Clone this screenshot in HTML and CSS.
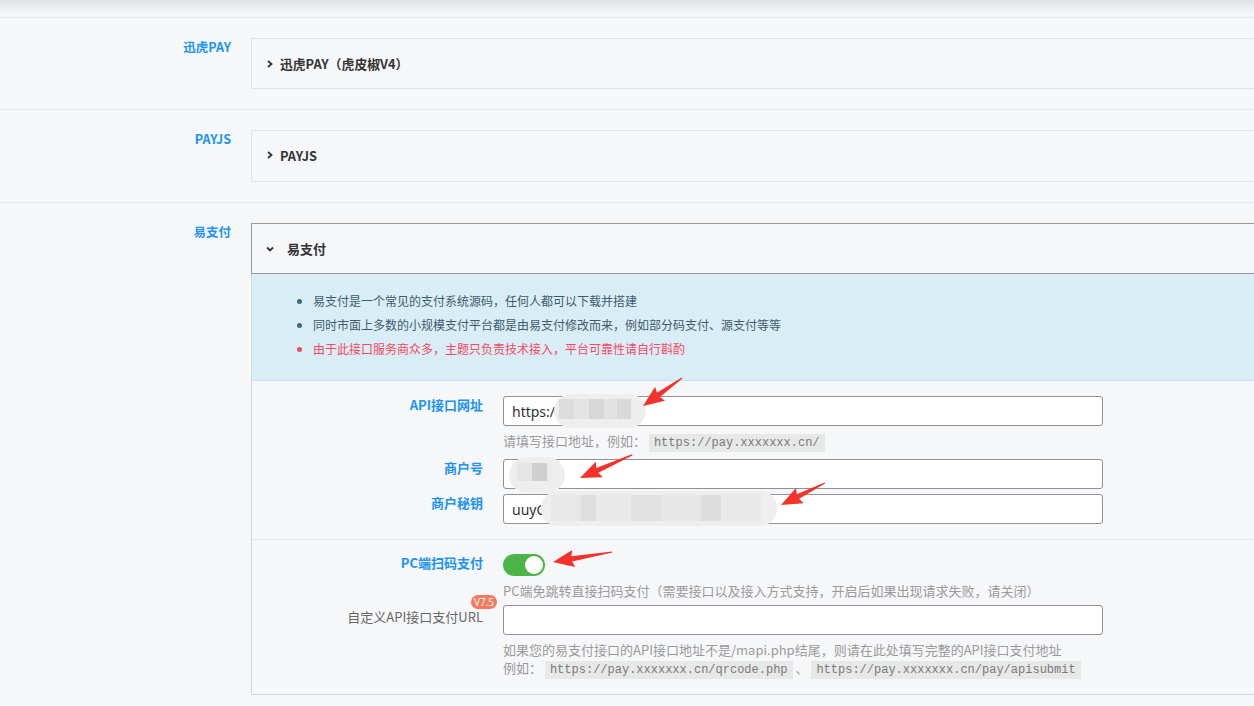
FILE: index.html
```html
<!DOCTYPE html>
<html lang="zh-CN">
<head>
<meta charset="utf-8">
<title>支付设置</title>
<link rel="stylesheet" href="styles.css">
</head>
<body>
<div class="topbar"></div>

<div class="row">
  <div class="row-label">迅虎PAY</div>
  <div class="panel">
    <div class="panel-head">
      <svg class="chev" width="8" height="10" viewBox="0 0 8 10"><polyline points="2,2 5.5,5 2,8" fill="none" stroke="#333" stroke-width="1.8"/></svg>
      <span>迅虎PAY（虎皮椒V4）</span>
    </div>
  </div>
</div>

<div class="row">
  <div class="row-label">PAYJS</div>
  <div class="panel">
    <div class="panel-head tall">
      <svg class="chev" width="8" height="10" viewBox="0 0 8 10"><polyline points="2,2 5.5,5 2,8" fill="none" stroke="#333" stroke-width="1.8"/></svg>
      <span>PAYJS</span>
    </div>
  </div>
</div>

<div class="row last">
  <div class="row-label">易支付</div>
  <div class="panel open">
    <div class="panel-head">
      <svg class="chev-down" width="10" height="8" viewBox="0 0 10 8"><polyline points="2,2.5 5,5.5 8,2.5" fill="none" stroke="#333" stroke-width="1.8"/></svg>
      <span>易支付</span>
    </div>
    <div class="notice">
      <ul>
        <li>易支付是一个常见的支付系统源码，任何人都可以下载并搭建</li>
        <li>同时市面上多数的小规模支付平台都是由易支付修改而来，例如部分码支付、源支付等等</li>
        <li class="warn">由于此接口服务商众多，主题只负责技术接入，平台可靠性请自行斟酌</li>
      </ul>
    </div>

    <div class="form-group">
      <div class="field">
        <label class="field-label">API接口网址</label>
        <div class="control">
          <div class="input-wrap">
            <input class="text-input" type="text" value="https:/">
            <span class="mosaic m1"><span class="tiles"></span></span>
          </div>
          <div class="help">请填写接口地址，例如： <code>https://pay.xxxxxxx.cn/</code></div>
        </div>
      </div>
      <div class="field gap6">
        <label class="field-label">商户号</label>
        <div class="control">
          <div class="input-wrap">
            <input class="text-input" type="text" value="">
            <span class="mosaic m2"><span class="tiles"></span></span>
          </div>
        </div>
      </div>
      <div class="field gap5">
        <label class="field-label">商户秘钥</label>
        <div class="control">
          <div class="input-wrap">
            <input class="text-input" type="text" value="uuyC">
            <span class="mosaic m3"><span class="tiles"></span></span>
          </div>
        </div>
      </div>
    </div>

    <div class="form-group second">
      <div class="field">
        <label class="field-label">PC端扫码支付</label>
        <div class="control">
          <span class="switch"><span class="knob"></span></span>
          <div class="help">PC端免跳转直接扫码支付（需要接口以及接入方式支持，开启后如果出现请求失败，请关闭）</div>
        </div>
      </div>
      <div class="field gap4">
        <label class="field-label plain">自定义API接口支付URL<span class="badge">V7.5</span></label>
        <div class="control">
          <div class="input-wrap">
            <input class="text-input" type="text" value="">
          </div>
          <div class="help tight">如果您的易支付接口的API接口地址不是/mapi.php结尾，则请在此处填写完整的API接口支付地址<br>例如： <code>https://pay.xxxxxxx.cn/qrcode.php</code> 、 <code>https://pay.xxxxxxx.cn/pay/apisubmit</code></div>
        </div>
      </div>
    </div>
  </div>
</div>

<svg class="annot" width="1254" height="706" viewBox="0 0 1254 706">
  <g fill="#f5312c">
    <g transform="translate(643 406) rotate(144.3)"><polygon points="-48,-0.6 -19,-2.6 -21,-8.5 0,0 -21,8.5 -19,2.6 -48,0.6"/></g>
    <g transform="translate(580 478) rotate(156.1)"><polygon points="-57,-0.6 -19,-2.6 -21,-8.5 0,0 -21,8.5 -19,2.6 -57,0.6"/></g>
    <g transform="translate(781 505) rotate(153.4)"><polygon points="-49,-0.6 -19,-2.6 -21,-8.5 0,0 -21,8.5 -19,2.6 -49,0.6"/></g>
    <g transform="translate(553 562) rotate(170.4)"><polygon points="-60,-0.6 -19,-2.6 -21,-8.5 0,0 -21,8.5 -19,2.6 -60,0.6"/></g>
  </g>
</svg>
</body>
</html>
```

FILE: styles.css
```css
html, body {
  margin: 0;
  padding: 0;
  overflow: hidden;
}
body {
  position: relative;
  width: 1254px;
  height: 706px;
  background: #f6f7f9;
  font-family: "Noto Sans CJK SC", "Noto Sans", sans-serif;
  font-size: 12px;
  color: #333;
}
.topbar {
  height: 17px;
  background: linear-gradient(#dfe0e2, #f6f7f9 14px);
  border-bottom: 1px solid #e8e9eb;
}
.row {
  display: flex;
  align-items: flex-start;
  padding: 20px 0;
  border-bottom: 1px solid #e6e7e9;
}
.row.last {
  border-bottom: none;
  padding-bottom: 0;
}
.row-label {
  width: 231px;
  flex: none;
  text-align: right;
  color: #1c93f3;
  font-weight: bold;
  font-size: 12.5px;
  line-height: 18px;
  margin-right: 20px;
}
.panel {
  flex: 1;
  margin-right: -30px;
  border: 1px solid #e2e3e5;
  background: #f6f7f9;
}
.panel-head {
  height: 49px;
  display: flex;
  align-items: center;
  padding-left: 14px;
  font-weight: bold;
  font-size: 12.8px;
  color: #333;
}
.panel-head.tall {
  height: 50px;
  padding-bottom: 2px;
  box-sizing: border-box;
}
.panel-head .chev {
  margin-right: 6px;
}
.panel.open {
  border: 1px solid #d5d6d8;
  border-top: none;
}
.panel.open .panel-head {
  margin: 0 -1px 0 -1px;
  border: 1px solid #999;
  padding-left: 13px;
  font-size: 13px;
}
.panel.open .chev-down {
  margin-right: 12px;
}
.notice {
  background: #d9edf7;
  border-bottom: 1px solid #c3e1ee;
  padding: 15px 0 19px;
}
.notice ul {
  margin: 0;
  padding-left: 61px;
  list-style: disc;
  color: #3f5a6b;
}
.notice li {
  line-height: 24px;
}
.notice li::marker {
  color: #3f6a80;
}
.notice li.warn {
  color: #f4485e;
}
.notice li.warn::marker {
  color: #f4485e;
}
.form-group {
  padding: 15px 0 15px;
  border-bottom: 1px solid #e4e5e7;
}
.form-group.second {
  padding: 14px 0 15px;
  border-bottom: none;
}
.field {
  display: flex;
  align-items: flex-start;
}
.field.gap6 { margin-top: 6px; }
.field.gap5 { margin-top: 5px; }
.field.gap4 { margin-top: 4px; }
.field-label {
  position: relative;
  width: 231px;
  flex: none;
  margin-right: 20px;
  text-align: right;
  line-height: 18px;
  font-size: 13px;
  color: #1c93f3;
  font-weight: bold;
}
.field-label.plain {
  color: #666;
  font-weight: normal;
  padding-top: 3px;
}
.badge {
  position: absolute;
  right: -14px;
  top: -10px;
  height: 14px;
  padding: 0 3px;
  border-radius: 7px;
  background: #f6775b;
  color: #fff;
  font-size: 10px;
  line-height: 14px;
  font-weight: normal;
  font-family: "Noto Sans", "Liberation Sans", sans-serif;
}
.control {
  width: 600px;
}
.input-wrap {
  position: relative;
  height: 30px;
}
.text-input {
  box-sizing: border-box;
  width: 600px;
  height: 30px;
  margin: 0;
  border: 1px solid #8f9195;
  border-radius: 3px;
  background: #fff;
  padding: 0 8px;
  font-family: "Noto Sans", "Noto Sans CJK SC", sans-serif;
  font-size: 14px;
  color: #333;
  outline: none;
}
.mosaic {
  position: absolute;
  background: #eeeeef;
  border-radius: 17px;
  filter: blur(0.6px);
}
.mosaic .tiles {
  position: absolute;
}
.m1 { left: 51px; top: -2px; width: 92px; height: 34px; }
.m1 .tiles {
  left: 5px; top: 5px; width: 72px; height: 20px;
  background: linear-gradient(90deg, #dcdcdc 0 15px, #e3e3e4 15px 30px, #d7d7d7 30px 45px, #e2e2e3 45px 58px, #d9d9da 58px 72px);
}
.m2 { left: 6px; top: -2px; width: 56px; height: 36px; border-radius: 18px; }
.m2 .tiles {
  left: 8px; top: 6px; width: 34px; height: 18px;
  background: linear-gradient(90deg, #e6e6e6 0 15px, #cfcfcf 15px 30px, #ebebeb 30px 34px);
}
.m3 { left: 38px; top: -3px; width: 236px; height: 35px; }
.m3 .tiles {
  left: 10px; top: 4px; width: 210px; height: 26px;
  background:
    linear-gradient(90deg, #e8e8e8 0 30px, #dedede 30px 45px, #e9e9e9 45px 80px, #e2e2e2 80px 110px, #e7e7e7 110px 150px, #dddddd 150px 170px, #e8e8e8 170px 210px);
}
.help {
  margin-top: 5px;
  line-height: 20px;
  font-size: 13px;
  color: #9a9a9a;
  white-space: nowrap;
}
.help.tight {
  margin-top: 6px;
  line-height: 18px;
}
code {
  font-family: "Liberation Mono", "DejaVu Sans Mono", monospace;
  font-size: 12px;
  background: #e7e8e8;
  color: #7a7a7a;
  padding: 2px 5px;
}
.switch {
  display: block;
  position: relative;
  width: 42px;
  height: 22px;
  border-radius: 11px;
  background: #4db548;
}
.switch .knob {
  position: absolute;
  right: 2px;
  top: 2px;
  width: 18px;
  height: 18px;
  border-radius: 50%;
  background: #fff;
}
.annot {
  position: absolute;
  left: 0;
  top: 0;
  pointer-events: none;
}
```
